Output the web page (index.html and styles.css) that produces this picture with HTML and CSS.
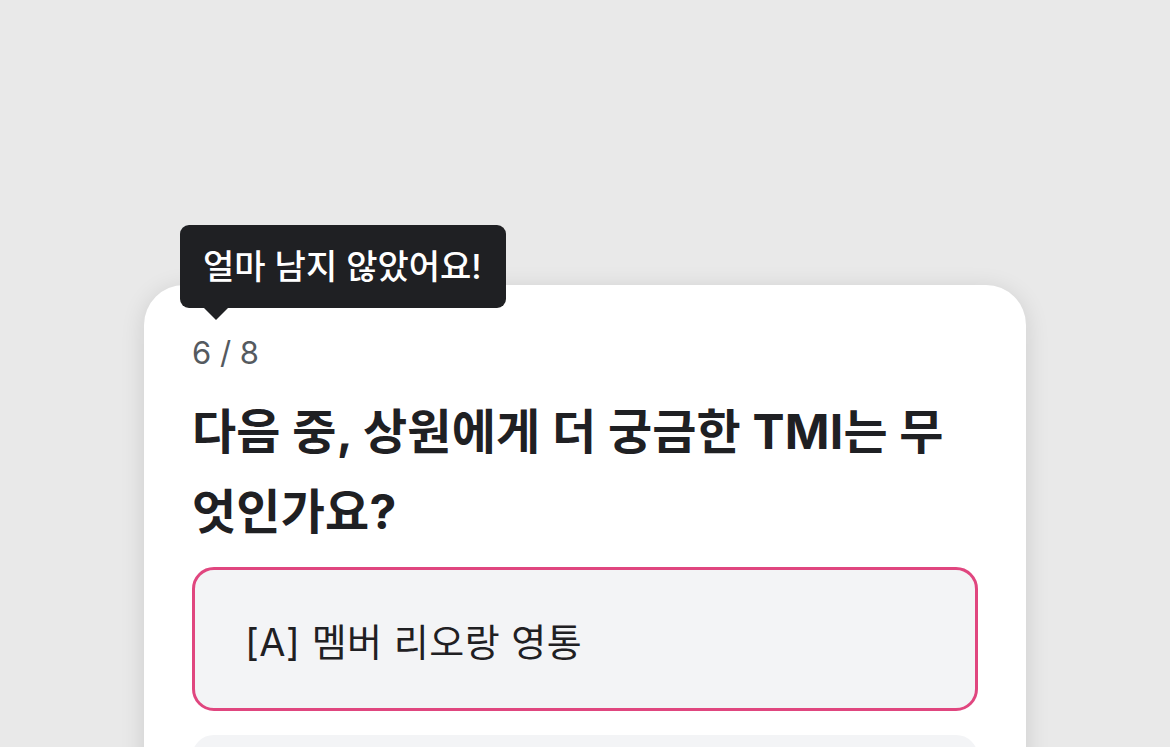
FILE: index.html
```html
<!DOCTYPE html>
<html lang="ko">
<head>
    <meta charset="UTF-8">
    <meta name="viewport" content="width=device-width, initial-scale=1.0">
    <title>TMI 퀴즈</title>
    <link rel="stylesheet" href="styles.css">
</head>
<body>

    <div class="quiz">
        <!-- Tooltip sobre la tarjeta -->
        <div class="tip">얼마 남지 않았어요!</div>

        <div class="card">
            <p class="step">6 / 8</p>
            <h1 class="question">다음 중, 상원에게 더 궁금한 TMI는 무엇인가요?</h1>

            <div class="options">
                <button class="option selected">[A] 멤버 리오랑 영통</button>
                <button class="option"></button>
            </div>
        </div>
    </div>

</body>
</html>
```

FILE: styles.css
```css
body {
    margin: 0;
    padding: 0;
    background-color: #e9e9e9;
    font-family: "Inter", "Noto Sans CJK KR", sans-serif;
    color: #1f2023;
    overflow: hidden;
    height: 747px;
}

.quiz {
    position: relative;
    width: 882px;
    margin: 285px auto 0;
}

/* Tooltip negro con flecha */
.tip {
    position: absolute;
    left: 36px;
    top: -60px;
    z-index: 2;
    background-color: #1f2023;
    color: #fff;
    font-size: 34px;
    font-weight: 500;
    line-height: 83px;
    height: 83px;
    padding: 0 24px 0 23px;
    border-radius: 9px;
}

.tip::after {
    content: "";
    position: absolute;
    left: 24px;
    bottom: -12px;
    border-left: 12px solid transparent;
    border-right: 12px solid transparent;
    border-top: 12px solid #1f2023;
}

.card {
    background-color: #fff;
    border-radius: 40px;
    padding: 48px 48px 0;
    box-shadow: 0 4px 24px rgba(0, 0, 0, 0.12);
    height: 600px;
}

.step {
    margin: 0;
    font-size: 31px;
    line-height: 40px;
    color: #555a5f;
}

.question {
    margin: 19px 0 0;
    font-size: 48px;
    font-weight: 700;
    line-height: 80px;
    letter-spacing: 0.2px;
    color: #1f2023;
}

.options {
    display: flex;
    flex-direction: column;
    gap: 24px;
    margin-top: 15px;
}

.option {
    display: block;
    width: 100%;
    height: 144px;
    text-align: left;
    font-family: inherit;
    font-size: 38px;
    letter-spacing: 0.5px;
    color: #1f2023;
    background-color: #f3f4f6;
    border: 3px solid #f3f4f6;
    border-radius: 22px;
    padding: 0 0 0 50px;
    cursor: pointer;
}

.option.selected {
    border-color: #e0467f;
}
```
